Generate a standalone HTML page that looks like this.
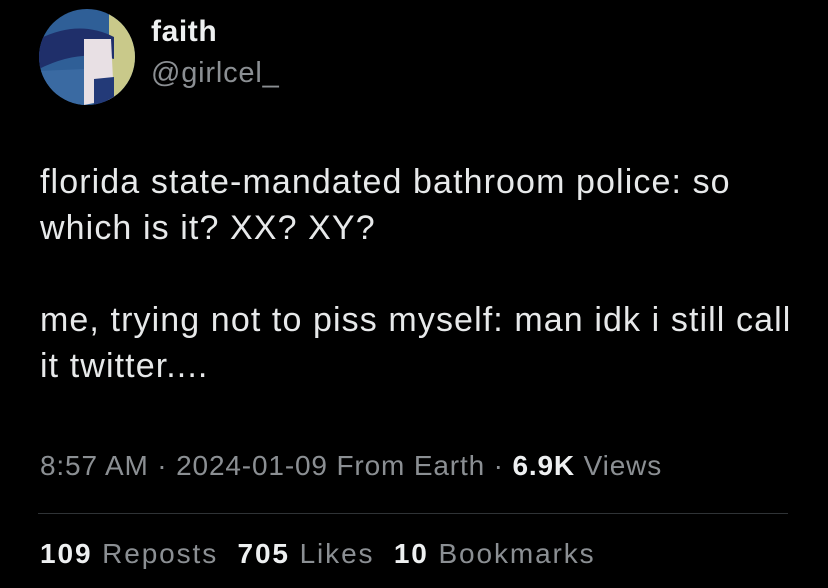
<!DOCTYPE html>
<html><head><style>
body{margin:0;width:828px;height:588px;background:#000;overflow:hidden;font-family:"Liberation Sans",sans-serif;position:relative;color:#e7e9ea}
.a{position:absolute;white-space:nowrap}
.g{color:#8b8f93}
b{color:#eef0f1}
</style></head><body>
<svg class="a" style="left:39px;top:9px" width="96" height="96" viewBox="0 0 96 96">
<defs><clipPath id="c"><circle cx="48" cy="48" r="48"/></clipPath></defs>
<g clip-path="url(#c)">
<rect width="96" height="96" fill="#2f5f97"/>
<rect x="70" y="0" width="26" height="96" fill="#c9c98a"/>
<path d="M0 30 Q40 10 75 28 L75 50 Q40 40 0 60Z" fill="#1f2f6a"/>
<path d="M45 30 L72 30 L75 90 L45 96Z" fill="#e8e0e4"/>
<path d="M0 62 L45 60 L45 96 L0 96Z" fill="#3a6aa2"/>
<path d="M55 70 L75 68 L75 96 L55 96Z" fill="#233a78"/>
</g></svg>
<div class="a" style="left:151px;top:15px;font-size:30px;letter-spacing:0.6px;font-weight:bold;color:#eef0f1">faith</div>
<div class="a g" style="left:151px;top:57px;font-size:29px;letter-spacing:0.8px">@girlcel_</div>
<div class="a" style="left:40px;top:159px;font-size:34px;letter-spacing:1.1px;line-height:46px;color:#e7e9ea">florida state-mandated bathroom police: so<br>which is it? XX? XY?<br><br>me, trying not to piss myself: man idk i still call<br>it twitter....</div>
<div class="a g" style="left:40px;top:450px;font-size:28px;letter-spacing:0.85px">8:57 AM · 2024-01-09 From Earth · <b>6.9K</b> Views</div>
<div class="a" style="left:38px;top:513px;width:750px;height:1px;background:#2f3336"></div>
<div class="a g" style="left:40px;top:538px;font-size:28px;letter-spacing:1.9px"><b>109</b> Reposts&nbsp; <b>705</b> Likes&nbsp; <b>10</b> Bookmarks</div>
</body></html>
